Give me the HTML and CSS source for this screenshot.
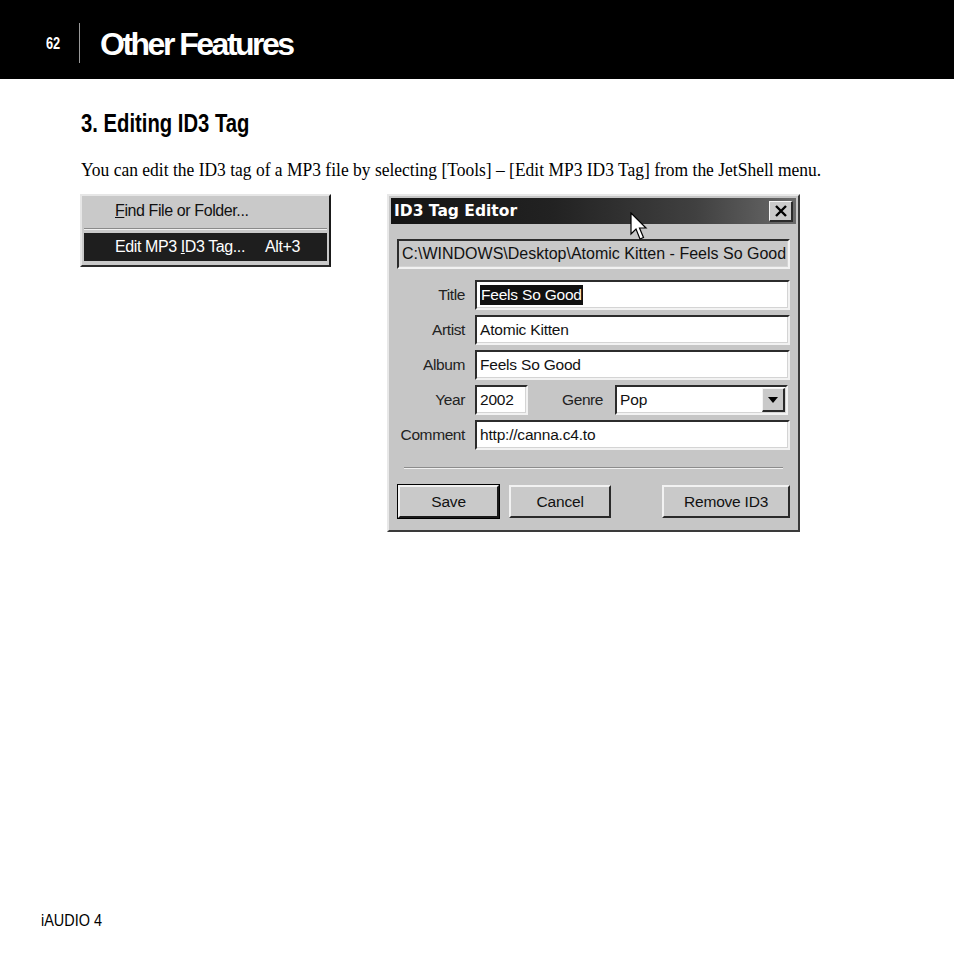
FILE: index.html
```html
<!DOCTYPE html>
<html>
<head>
<meta charset="utf-8">
<link rel="stylesheet" href="styles.css">
</head>
<body>
<div class="page">
  <header class="topbar">
    <span class="pagenum">62</span>
    <span class="divider"></span>
    <h1 class="title">Other Features</h1>
  </header>
  <main class="content">
    <h2 class="section"><span class="section-text">3. Editing ID3 Tag</span></h2>
    <p class="intro"><span class="intro-text">You can edit the ID3 tag of a MP3 file by selecting [Tools] – [Edit MP3 ID3 Tag] from the JetShell menu.</span></p>
    <div class="figures">
      <div class="menu">
        <div class="menu-item"><span class="mi-label"><u>F</u>ind File or Folder...</span></div>
        <div class="menu-sep"></div>
        <div class="menu-item active"><span class="mi-label">Edit MP3 <u>I</u>D3 Tag...</span><span class="mi-key">Alt+3</span></div>
      </div>
      <div class="dialog">
        <div class="titlebar">
          <span class="tb-text">ID3 Tag Editor</span>
          <span class="tb-close"><svg width="14" height="12" viewBox="0 0 14 12"><path d="M2 1 L12 11 M12 1 L2 11" stroke="#000" stroke-width="2.4" fill="none"/></svg></span>
          <svg class="cursor" width="20" height="30" viewBox="0 0 20 30"><path d="M1 1 L1 22 L6 17 L10 27 L13.5 25.5 L9.5 16 L16 16 Z" fill="#fff" stroke="#000" stroke-width="1.2" stroke-linejoin="miter"/></svg>
        </div>
        <div class="dlg-body">
          <div class="field path">C:\WINDOWS\Desktop\Atomic Kitten - Feels So Good</div>
          <div class="form">
            <div class="row"><span class="lbl">Title</span><div class="field input"><span class="sel">Feels So Good</span></div></div>
            <div class="row"><span class="lbl">Artist</span><div class="field input">Atomic Kitten</div></div>
            <div class="row"><span class="lbl">Album</span><div class="field input">Feels So Good</div></div>
            <div class="row"><span class="lbl">Year</span><div class="field input year">2002</div><span class="lbl genre-lbl">Genre</span><div class="field input genre"><span class="genre-val">Pop</span><span class="drop"><svg width="10" height="6" viewBox="0 0 10 6"><path d="M0 0 H10 L5 6 Z" fill="#000"/></svg></span></div></div>
            <div class="row"><span class="lbl">Comment</span><div class="field input">http://canna.c4.to</div></div>
          </div>
          <div class="hsep"></div>
          <div class="buttons">
            <button class="btn default">Save</button>
            <button class="btn cancel">Cancel</button>
            <button class="btn remove">Remove ID3</button>
          </div>
        </div>
      </div>
    </div>
  </main>
  <footer class="footer"><span class="footer-text">iAUDIO 4</span></footer>
</div>
</body>
</html>
```
FILE: styles.css
```css
html, body { margin: 0; padding: 0; background: #fff; }
.page {
  width: 954px;
  height: 954px;
  display: flex;
  flex-direction: column;
  font-family: "Liberation Sans", Arial, sans-serif;
  color: #000;
}
.topbar {
  height: 79px;
  background: #000;
  display: flex;
  align-items: center;
  padding-left: 46px;
  box-sizing: border-box;
}
.pagenum {
  color: #fff;
  font-weight: bold;
  font-size: 16px;
  display: inline-block;
  transform: scaleX(0.8);
  transform-origin: left center;
  margin-top: 8px;
  width: 17px;
}
.divider {
  width: 1px;
  height: 40px;
  background: #9a9a9a;
  margin-left: 16px;
  margin-top: 6px;
}
.title {
  margin: 0 0 0 20px;
  color: #fff;
  font-size: 32px;
  font-weight: bold;
  letter-spacing: -2.5px;
  margin-top: 10px;
}
.content {
  padding-left: 80px;
}
.section {
  margin: 30px 0 0 1px;
  font-size: 25px;
  line-height: 28px;
  font-weight: bold;
}
.section-text {
  display: inline-block;
  transform: scaleX(0.81);
  transform-origin: left center;
  white-space: nowrap;
}
.intro {
  margin: 21px 0 0 1px;
  font-family: "Liberation Serif", "Times New Roman", serif;
  font-size: 19px;
  line-height: 24px;
  white-space: nowrap;
}
.intro-text {
  display: inline-block;
  transform: scaleX(0.92);
  transform-origin: left center;
}
.figures {
  display: flex;
  align-items: flex-start;
  gap: 56px;
  margin-top: 12px;
}
/* Menu */
.menu {
  width: 251px;
  height: 73px;
  box-sizing: border-box;
  background: #c9c9c9;
  border-top: 2px solid #e6e6e6;
  border-left: 2px solid #e6e6e6;
  border-right: 2px solid #1a1a1a;
  border-bottom: 2px solid #2a2a2a;
  padding: 1px 2px;
  font-size: 16px;
  display: flex;
  flex-direction: column;
}
.menu-item {
  height: 28px;
  display: flex;
  align-items: center;
  padding-left: 31px;
  color: #111;
}
.mi-label { display: inline-block; width: 150px; letter-spacing: -0.4px; }
.mi-key { letter-spacing: -0.4px; }
.menu-item.active {
  background: #1e1e1e;
  color: #fff;
  margin-top: 2px;
}
.menu-sep {
  height: 0;
  border-top: 1px solid #8a8a8a;
  border-bottom: 1px solid #f0f0f0;
  margin: 3px 0 1px;
}
/* Dialog */
.dialog {
  width: 413px;
  height: 338px;
  box-sizing: border-box;
  background: #c6c6c6;
  border-top: 2px solid #e8e8e8;
  border-left: 2px solid #e8e8e8;
  border-right: 2px solid #3a3a3a;
  border-bottom: 2px solid #3a3a3a;
  padding: 2px;
  display: flex;
  flex-direction: column;
  font-size: 15.5px;
}
.titlebar {
  position: relative;
  height: 26px;
  background: linear-gradient(to right, #141414 0%, #222 40%, #404040 75%, #6a6a6a 100%);
  display: flex;
  align-items: center;
  padding: 0 3px 0 3px;
}
.tb-text {
  color: #fff;
  font-family: "DejaVu Sans", "Liberation Sans", sans-serif;
  font-weight: bold;
  font-size: 15.5px;
  letter-spacing: 0px;
  flex: 1;
}
.tb-close {
  width: 24px;
  height: 21px;
  box-sizing: border-box;
  background: #cacaca;
  border-top: 1px solid #f4f4f4;
  border-left: 1px solid #f4f4f4;
  border-right: 2px solid #2a2a2a;
  border-bottom: 2px solid #2a2a2a;
  display: flex;
  align-items: center;
  justify-content: center;
}
.cursor {
  position: absolute;
  left: 239px;
  top: 14px;
}
.dlg-body {
  padding: 15px 6px 0 6px;
  display: flex;
  flex-direction: column;
}
.field {
  box-sizing: border-box;
  border-top: 2px solid #2c2c2c;
  border-left: 2px solid #2c2c2c;
  border-right: 2px solid #f2f2f2;
  border-bottom: 2px solid #f2f2f2;
  box-shadow: inset -1px -1px 0 #d4d4d4;
  display: flex;
  align-items: center;
  white-space: nowrap;
  overflow: hidden;
  color: #111;
}
.path {
  height: 30px;
  padding-left: 3px;
  background: #c9c9c9;
  font-size: 16px;
  letter-spacing: 0px;
}
.form {
  display: flex;
  flex-direction: column;
  gap: 5px;
  margin-top: 11px;
}
.row {
  display: flex;
  align-items: center;
  height: 30px;
}
.lbl {
  width: 68px;
  text-align: right;
  margin-right: 10px;
  color: #222;
  letter-spacing: -0.4px;
}
.input {
  flex: 1;
  height: 30px;
  background: #fff;
  padding-left: 3px;
  letter-spacing: -0.2px;
}
.sel {
  background: #111;
  color: #fff;
  padding: 1px 1px;
}
.input.year {
  flex: 0 0 53px;
}
.genre-lbl {
  width: auto;
  margin-left: 34px;
  margin-right: 12px;
}
.input.genre {
  flex: 1;
  margin-right: 2px;
  justify-content: space-between;
  padding-right: 1px;
}
.drop {
  width: 23px;
  height: 24px;
  box-sizing: border-box;
  background: #c9c9c9;
  border-top: 1px solid #f4f4f4;
  border-left: 1px solid #f4f4f4;
  border-right: 2px solid #2a2a2a;
  border-bottom: 2px solid #2a2a2a;
  display: flex;
  align-items: center;
  justify-content: center;
}
.hsep {
  margin: 17px 7px 0 7px;
  border-top: 1px solid #8c8c8c;
  border-bottom: 1px solid #f0f0f0;
}
.buttons {
  display: flex;
  margin-top: 16px;
}
.btn {
  height: 33px;
  box-sizing: border-box;
  background: #c9c9c9;
  font-family: "Liberation Sans", Arial, sans-serif;
  font-size: 15.5px;
  color: #111;
  border-top: 2px solid #f2f2f2;
  border-left: 2px solid #f2f2f2;
  border-right: 2px solid #2a2a2a;
  border-bottom: 2px solid #2a2a2a;
  padding: 0;
  letter-spacing: -0.2px;
}
.btn.default {
  width: 102px;
  margin-left: 1px;
  outline: 1px solid #000;
  border-right-color: #1a1a1a;
  border-bottom-color: #1a1a1a;
}
.btn.cancel {
  width: 103px;
  margin-left: 10px;
}
.btn.remove {
  width: 129px;
  margin-left: 51px;
}
.footer {
  margin-top: auto;
  height: 43px;
  padding-left: 41px;
}
.footer-text {
  display: inline-block;
  font-size: 17px;
  transform: scaleX(0.85);
  transform-origin: left center;
}
```
